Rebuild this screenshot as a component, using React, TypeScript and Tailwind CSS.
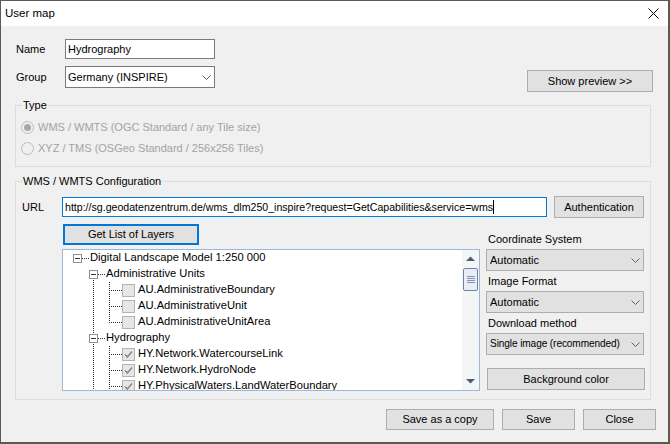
import React from "react";

const Chevron = ({ color = "#5a5a5a" }: { color?: string }) => (
  <svg width="9" height="5" viewBox="0 0 9 5" className="shrink-0">
    <path d="M0.5 0.5 L4.5 4.5 L8.5 0.5" fill="none" stroke={color} strokeWidth="1" />
  </svg>
);

function Btn({ children, className = "" }: { children: React.ReactNode; className?: string }) {
  return (
    <div className={"flex items-center justify-center bg-[#e1e1e1] border border-[#adadad] whitespace-nowrap " + className}>
      {children}
    </div>
  );
}

function GraySelect({ value, small }: { value: string; small?: boolean }) {
  return (
    <div className="w-[158px] h-[22px] bg-[#e1e1e1] border border-[#adadad] flex items-center justify-between pl-[3px] pr-[3px]">
      <span className={small ? "whitespace-nowrap text-[10.1px] tracking-[-0.1px]" : "whitespace-nowrap"}>{value}</span>
      <Chevron color="#606060" />
    </div>
  );
}

type Row = { level: 0 | 1 | 2; text: string; checked?: boolean };
const rows: Row[] = [
  { level: 0, text: "Digital Landscape Model 1:250 000" },
  { level: 1, text: "Administrative Units" },
  { level: 2, text: "AU.AdministrativeBoundary", checked: false },
  { level: 2, text: "AU.AdministrativeUnit", checked: false },
  { level: 2, text: "AU.AdministrativeUnitArea", checked: false },
  { level: 1, text: "Hydrography" },
  { level: 2, text: "HY.Network.WatercourseLink", checked: true },
  { level: 2, text: "HY.Network.HydroNode", checked: true },
  { level: 2, text: "HY.PhysicalWaters.LandWaterBoundary", checked: true },
];

function Expander() {
  return (
    <span className="w-[9px] h-[9px] border border-[#919191] bg-white flex items-center justify-center shrink-0">
      <span className="w-[5px] h-[1px] bg-[#333]" />
    </span>
  );
}

function CheckBox({ checked }: { checked?: boolean }) {
  return (
    <span className="w-[13px] h-[13px] border border-[#b3b3b3] bg-[#e6e6e6] flex items-center justify-center shrink-0">
      {checked && (
        <svg width="11" height="11" viewBox="0 0 11 11">
          <path d="M2 5.5 L4.3 8 L9 2.5" fill="none" stroke="#8a8a8a" strokeWidth="1.6" />
        </svg>
      )}
    </span>
  );
}

function TreeLines() {
  const dash = { stroke: "#2a2a2a", strokeWidth: 1, strokeDasharray: "1 1", shapeRendering: "crispEdges" as const };
  const horiz2 = [2, 3, 4, 6, 7, 8];
  return (
    <svg className="absolute left-0 top-0 pointer-events-none" width="399" height="140">
      <line x1="19" y1="8.5" x2="27" y2="8.5" {...dash} />
      <line x1="30.5" y1="24" x2="30.5" y2="140" {...dash} />
      <line x1="35" y1="24.5" x2="43" y2="24.5" {...dash} />
      <line x1="35" y1="88.5" x2="43" y2="88.5" {...dash} />
      <line x1="46.5" y1="32" x2="46.5" y2="73" {...dash} />
      <line x1="46.5" y1="96" x2="46.5" y2="140" {...dash} />
      {horiz2.map((i) => (
        <line key={i} x1="48" y1={16 * i + 8.5} x2="59" y2={16 * i + 8.5} {...dash} />
      ))}
    </svg>
  );
}

function Scrollbar() {
  return (
    <div className="w-[17px] h-full bg-[#f4f5f7] flex flex-col items-center shrink-0">
      <div className="h-[17px] w-full flex items-center justify-center">
        <svg width="9" height="5" viewBox="0 0 9 5">
          <path d="M0 5 L4.5 0.5 L9 5 Z" fill="#4f5d78" />
        </svg>
      </div>
      <div className="mt-[1px] w-[15px] h-[23px] rounded-[2px] border border-[#6f84ab] bg-[#e9eef6] flex flex-col items-center justify-center gap-[1px]">
        <span className="w-[8px] h-[1px] bg-[#8392ad]" />
        <span className="w-[8px] h-[1px] bg-[#8392ad]" />
        <span className="w-[8px] h-[1px] bg-[#8392ad]" />
        <span className="w-[8px] h-[1px] bg-[#8392ad]" />
      </div>
      <div className="flex-1" />
      <div className="h-[17px] w-full flex items-center justify-center">
        <svg width="9" height="5" viewBox="0 0 9 5">
          <path d="M0 0 L4.5 4.5 L9 0 Z" fill="#4f5d78" />
        </svg>
      </div>
    </div>
  );
}

function Tree() {
  return (
    <div className="mt-[4px] w-[418px] h-[142px] border border-[#9fb7d7] bg-white flex overflow-hidden">
      <div className="relative flex-1 h-full overflow-hidden">
        <TreeLines />
        <div className="relative flex flex-col text-[11.2px]">
          {rows.map((r, i) => (
            <div key={i} className="h-[16px] flex items-center whitespace-nowrap">
              {r.level === 0 && (
                <>
                  <span className="w-[10px] shrink-0" />
                  <Expander />
                  <span className="ml-[8px]">{r.text}</span>
                </>
              )}
              {r.level === 1 && (
                <>
                  <span className="w-[26px] shrink-0" />
                  <Expander />
                  <span className="ml-[8px]">{r.text}</span>
                </>
              )}
              {r.level === 2 && (
                <>
                  <span className="w-[59px] shrink-0" />
                  <CheckBox checked={r.checked} />
                  <span className="ml-[3px]">{r.text}</span>
                </>
              )}
            </div>
          ))}
        </div>
      </div>
      <Scrollbar />
    </div>
  );
}

function Radio({ checked, label }: { checked?: boolean; label: string }) {
  return (
    <div className="flex items-center h-[16px] pl-[5px] text-[#a3a3a3]">
      <span className="w-[13px] h-[13px] rounded-full border border-[#bcbcbc] bg-[#f0f0f0] flex items-center justify-center shrink-0">
        {checked && <span className="w-[7px] h-[7px] rounded-full bg-[#a8a8a8]" />}
      </span>
      <span className="ml-[4px]">{label}</span>
    </div>
  );
}

export default function App() {
  return (
    <div className="w-[670px] h-[444px] bg-[#5f5a3c] font-['Liberation_Sans',Arial,sans-serif] text-[11px] text-black leading-none">
      <div className="w-[669px] h-[443px] border border-[#5a5a5a] bg-[#f0f0f0] flex flex-col">
        {/* Title bar */}
        <div className="h-[25px] bg-white flex items-center justify-between pl-[4px] pr-[9px] shrink-0">
          <span className="text-[11.5px]">User map</span>
          <svg width="11" height="11" viewBox="0 0 11 11">
            <path d="M0.5 0.5 L10.5 10.5 M10.5 0.5 L0.5 10.5" stroke="#000" strokeWidth="1" />
          </svg>
        </div>

        {/* Body */}
        <div className="flex-1 flex flex-col">
          {/* Top: name / group / preview */}
          <div className="flex items-start justify-between pt-[13px] pl-[15px] pr-[15px]">
            <div className="flex flex-col">
              <div className="flex items-center h-[20px]">
                <span className="w-[49px]">Name</span>
                <div className="w-[150px] h-[20px] border border-[#7a7a7a] bg-white flex items-center pl-[2px]">
                  Hydrography
                </div>
              </div>
              <div className="flex items-center h-[22px] mt-[7px]">
                <span className="w-[49px]">Group</span>
                <div className="w-[150px] h-[22px] border border-[#7a7a7a] bg-white flex items-center justify-between pl-[2px] pr-[3px]">
                  <span>Germany (INSPIRE)</span>
                  <Chevron />
                </div>
              </div>
            </div>
            <Btn className="w-[126px] h-[22px] mt-[31px]">Show preview &gt;&gt;</Btn>
          </div>

          {/* Type group */}
          <fieldset className="ml-[14px] w-[636px] mt-[5px] border border-[#dcdcdc] pt-[6px] pb-[10px]">
            <legend className="ml-[6px] px-[1px] leading-[16px]">Type</legend>
            <div className="flex flex-col gap-[5px]">
              <Radio checked label="WMS / WMTS (OGC Standard / any Tile size)" />
              <Radio label="XYZ / TMS (OSGeo Standard / 256x256 Tiles)" />
            </div>
          </fieldset>

          {/* WMS group */}
          <fieldset className="ml-[14px] w-[636px] mt-[6px] border border-[#dcdcdc] pt-[7px] pb-[8px]">
            <legend className="ml-[6px] px-[1px] leading-[16px]">WMS / WMTS Configuration</legend>
            <div className="flex items-center h-[22px] pl-[6px]">
              <span className="w-[40px]">URL</span>
              <div className="w-[485px] h-[20px] border border-[#0078d7] bg-white flex items-center pl-[2px] whitespace-nowrap overflow-hidden">
                <span className="text-[10.6px]">http://sg.geodatenzentrum.de/wms_dlm250_inspire?request=GetCapabilities&amp;service=wms</span>
                <span className="w-[1px] h-[14px] bg-black" />
              </div>
              <Btn className="ml-[7px] w-[90px] h-[22px]">Authentication</Btn>
            </div>
            <div className="flex items-start mt-[6px] pl-[46px]">
              <div className="flex flex-col w-[418px]">
                <div className="ml-[1px] w-[136px] h-[21px] bg-[#e1e1e1] border-2 border-[#0078d7] flex items-center justify-center">
                  Get List of Layers
                </div>
                <Tree />
              </div>
              <div className="ml-[6px] flex flex-col pt-[7px]">
                <div className="h-[16px] flex items-center pl-[2px]">Coordinate System</div>
                <div className="mt-[2px]"><GraySelect value="Automatic" /></div>
                <div className="mt-[2px] h-[16px] flex items-center pl-[2px]">Image Format</div>
                <div className="mt-[2px]"><GraySelect value="Automatic" /></div>
                <div className="mt-[2px] h-[16px] flex items-center pl-[2px]">Download method</div>
                <div className="mt-[2px]"><GraySelect value="Single image (recommended)" small /></div>
                <Btn className="mt-[13px] ml-[1px] w-[158px] h-[22px]">Background color</Btn>
              </div>
            </div>
          </fieldset>

          {/* Bottom buttons */}
          <div className="flex justify-end gap-[8px] mt-[9px] pr-[12px]">
            <Btn className="w-[108px] h-[21px]">Save as a copy</Btn>
            <Btn className="w-[73px] h-[21px]">Save</Btn>
            <Btn className="w-[73px] h-[21px]">Close</Btn>
          </div>
        </div>
      </div>
    </div>
  );
}
